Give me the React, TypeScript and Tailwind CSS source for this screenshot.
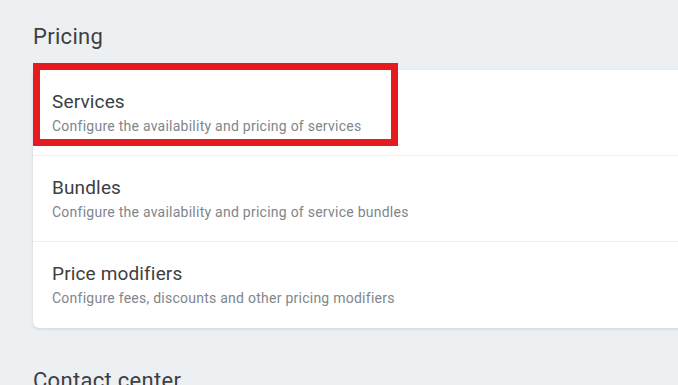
export default function App() {
  const rows = [
    { title: "Services", sub: "Configure the availability and pricing of services" },
    { title: "Bundles", sub: "Configure the availability and pricing of service bundles" },
    { title: "Price modifiers", sub: "Configure fees, discounts and other pricing modifiers" },
  ];
  return (
    <div
      className="relative w-[678px] h-[385px] overflow-hidden bg-[#edf0f3]"
      style={{ fontFamily: "Roboto, 'Noto Sans', sans-serif" }}
    >
      <div className="pl-[33px] pt-[22px]">
        <h2 className="text-[22px] leading-[30px] tracking-[0.3px] text-[#3c4043] font-normal">Pricing</h2>
        <div className="mt-[18px] w-[720px] bg-white rounded-[6px] shadow-[0_1px_3px_rgba(0,0,0,0.12)]">
          {rows.map((r, i) => (
            <div
              key={r.title}
              className={
                "h-[86px] flex flex-col justify-center pl-[19px] " +
                (i < rows.length - 1 ? "border-b border-[#eceef0]" : "")
              }
            >
              <div className="text-[19px] leading-[24px] tracking-[0.15px] text-[#3c4043]">{r.title}</div>
              <div className="mt-[2px] text-[14px] leading-[20px] tracking-[0.25px] text-[#80868b]">{r.sub}</div>
            </div>
          ))}
        </div>
        <h2 className="mt-[38px] text-[22px] leading-[30px] tracking-[0.3px] text-[#3c4043] font-normal">Contact center</h2>
      </div>
      <div className="absolute left-[33px] top-[63px] w-[365px] h-[83px] border-[7px] border-[#e51b1f]" />
    </div>
  );
}
